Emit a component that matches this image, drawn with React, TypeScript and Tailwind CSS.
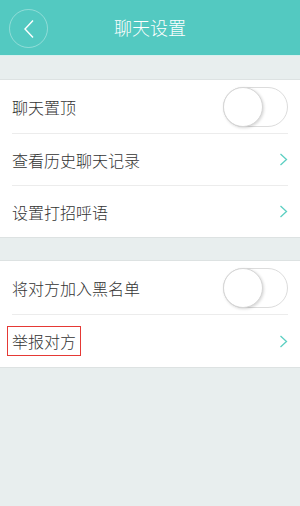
import React from "react";

const FONT = { fontFamily: '"Noto Sans CJK SC", "Noto Sans", sans-serif' };

function Toggle() {
  return (
    <div className="relative h-[40px] w-[65px] rounded-full border border-[#dcdcdc] bg-white">
      <div className="absolute left-[-1px] top-[-1px] h-[40px] w-[40px] rounded-full border border-[#d6d6d6] bg-white shadow-[1px_1px_3px_rgba(0,0,0,0.16)]" />
    </div>
  );
}

function Chevron() {
  return (
    <svg width="9" height="13" viewBox="0 0 9 13" fill="none">
      <path d="M1.5 1 L7.5 6.5 L1.5 12" stroke="#5ccfc2" strokeWidth="1.3" />
    </svg>
  );
}

function Row({
  label,
  right,
  h,
  last,
  boxed,
}: {
  label: string;
  right: React.ReactNode;
  h: string;
  last?: boolean;
  boxed?: boolean;
}) {
  return (
    <div className="pl-3 pr-3">
      <div
        className={`flex items-center justify-between ${h} ${
          last ? "" : "border-b border-[#ececec]"
        }`}
      >
        {boxed ? (
          <span className="-ml-[5px] border border-[#e53935] px-[4px] py-[2px] text-[16px] font-light leading-[24px] text-[#333]">
            {label}
          </span>
        ) : (
          <span className="text-[16px] font-light leading-[24px] text-[#333]">{label}</span>
        )}
        {right}
      </div>
    </div>
  );
}

export default function App() {
  return (
    <div className="h-[506px] w-[300px] bg-[#e8eeee]" style={FONT}>
      <div className="relative flex h-[56px] items-center justify-center bg-[#53c9c1] border-b border-[#d8f0ee]">
        <div className="absolute left-[9px] top-[9px] flex h-[39px] w-[39px] items-center justify-center rounded-full border border-[rgba(255,255,255,0.35)]">
          <svg width="12" height="20" viewBox="0 0 12 20" fill="none">
            <path d="M10 1.5 L2 10 L10 18.5" stroke="white" strokeWidth="1.4" />
          </svg>
        </div>
        <span className="text-[18px] font-light text-white">聊天设置</span>
      </div>
      <div className="h-[23px]" />
      <div className="border-y border-[#dde2e2] bg-white">
        <Row label="聊天置顶" right={<Toggle />} h="h-[54px]" />
        <Row label="查看历史聊天记录" right={<Chevron />} h="h-[52px]" />
        <Row label="设置打招呼语" right={<Chevron />} h="h-[51px]" last />
      </div>
      <div className="h-[22px]" />
      <div className="border-y border-[#dde2e2] bg-white">
        <Row label="将对方加入黑名单" right={<Toggle />} h="h-[54px]" />
        <Row label="举报对方" right={<Chevron />} h="h-[52px]" last boxed />
      </div>
    </div>
  );
}
